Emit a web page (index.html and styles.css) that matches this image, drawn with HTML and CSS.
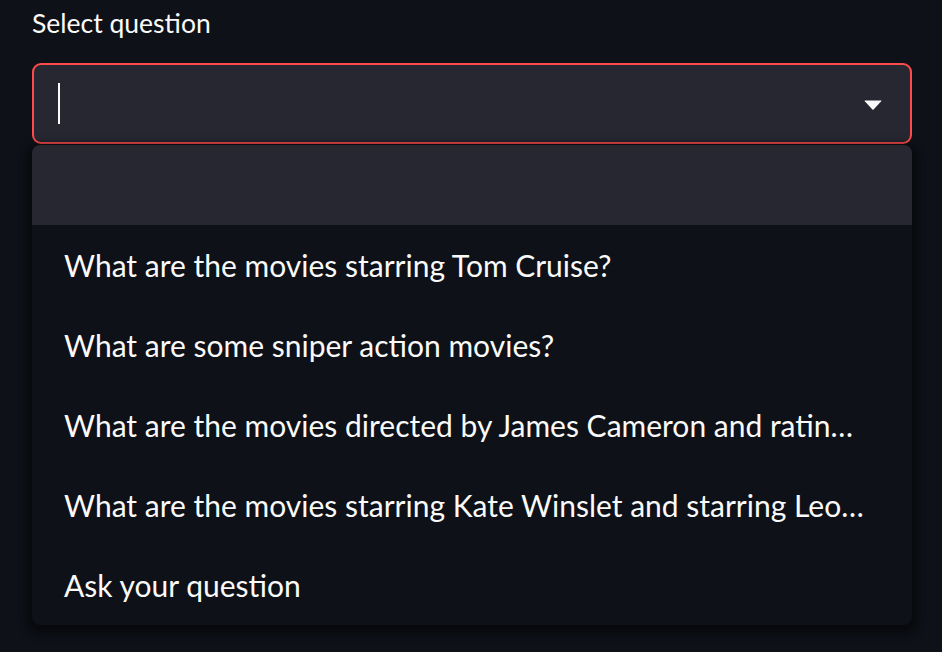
FILE: index.html
```html
<!DOCTYPE html>
<html lang="en">
<head>
<meta charset="utf-8">
<title>Select question</title>
<link rel="stylesheet" href="styles.css">
</head>
<body>
<div class="field">
  <label class="label">Select question</label>
  <div class="select">
    <span class="caret"></span>
    <svg class="arrow" width="18" height="10" viewBox="0 0 18 10" aria-hidden="true"><path d="M1 0.5 H17 Q17.8 0.5 17.2 1.2 L9.6 9.4 Q9 10 8.4 9.4 L0.8 1.2 Q0.2 0.5 1 0.5 Z" fill="#fafafa"/></svg>
  </div>
  <ul class="menu">
    <li class="item active"></li>
    <li class="item">What are the movies starring Tom Cruise?</li>
    <li class="item">What are some sniper action movies?</li>
    <li class="item">What are the movies directed by James Cameron and ratin…</li>
    <li class="item">What are the movies starring Kate Winslet and starring Leo…</li>
    <li class="item">Ask your question</li>
  </ul>
</div>
</body>
</html>
```
FILE: styles.css
```css
html, body {
  margin: 0;
  padding: 0;
  background: #0e1117;
  height: 100%;
  overflow: hidden;
}
body {
  font-family: "Lato", "Source Sans Pro", sans-serif;
  color: #fafafa;
}
.field {
  display: flex;
  flex-direction: column;
  padding: 0 30px 0 32px;
}
.label {
  display: block;
  font-size: 26.5px;
  line-height: 34px;
  height: 34px;
  margin-top: 6px;
  margin-bottom: 23px;
}
.select {
  box-sizing: border-box;
  height: 81px;
  border: 2px solid #ff4b4b;
  border-radius: 9px;
  background: #262730;
  display: flex;
  align-items: center;
  justify-content: space-between;
  padding: 0 28px 0 24px;
}
.caret {
  width: 2px;
  height: 41px;
  background: #fafafa;
}
.arrow {
  display: block;
  margin-top: 2px;
}
.menu {
  list-style: none;
  margin: 1px 0 0;
  padding: 0;
  background: #0e1117;
  border-radius: 8px;
  overflow: hidden;
  box-shadow: 0 4px 10px 4px rgba(5, 5, 8, 0.75);
}
.item {
  box-sizing: border-box;
  height: 80px;
  padding: 0 32px;
  display: flex;
  align-items: center;
  font-size: 30px;
  white-space: nowrap;
  overflow: hidden;
  text-overflow: ellipsis;
  color: #fafafa;
}
.item.active {
  background: #262730;
}
```
